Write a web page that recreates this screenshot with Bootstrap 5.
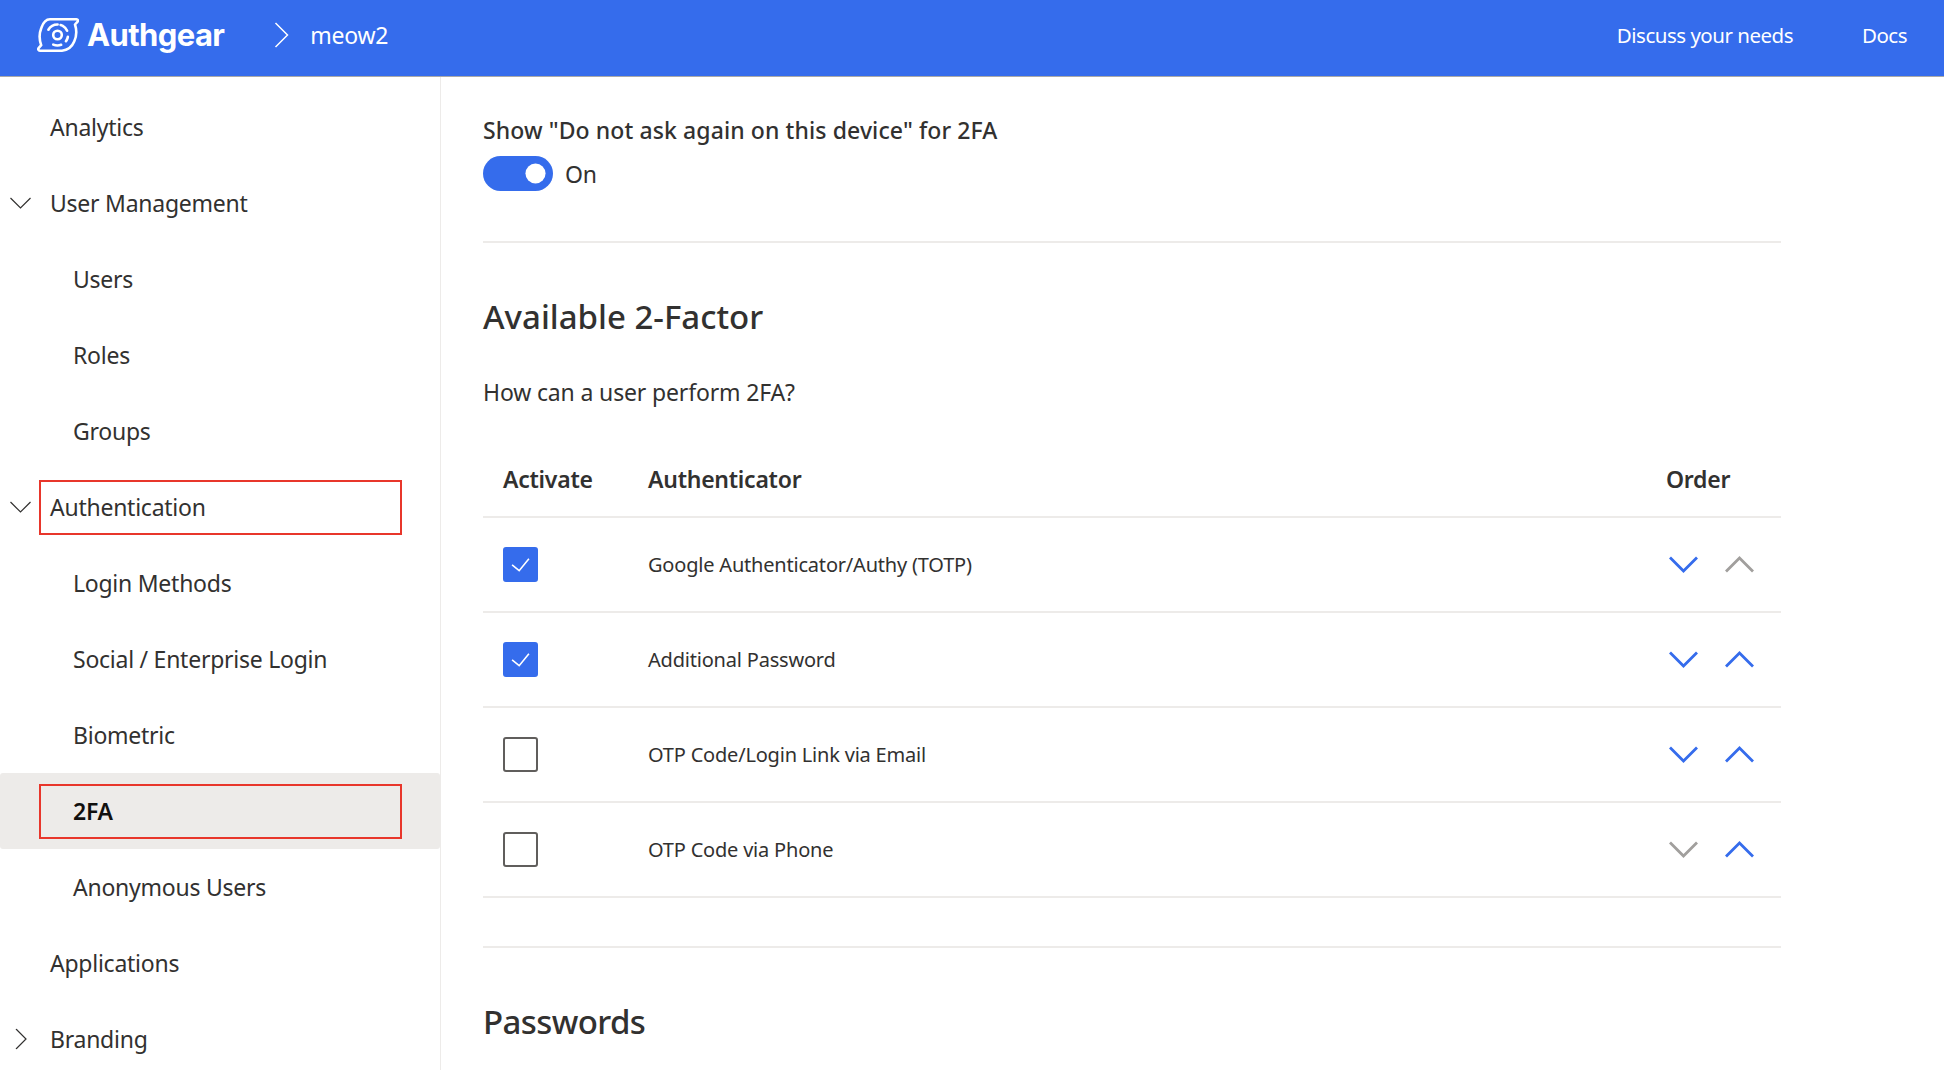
<!DOCTYPE html>
<html lang="en">
<head>
  <meta charset="UTF-8" />
  <meta name="viewport" content="width=device-width, initial-scale=1.0" />
  <title>Authgear - 2FA</title>
  <link rel="stylesheet" href="https://cdn.jsdelivr.net/npm/bootstrap@5.3.0/dist/css/bootstrap.min.css" />
  <style>
    body {
      font-family: "Noto Sans", "Open Sans", sans-serif;
      color: #323130;
      font-size: 23px;
      letter-spacing: -0.25px;
    }
    .ag-shell { height: 1070px; overflow: hidden; }
    .ag-top {
      height: 77px;
      background: #356cec;
      border-bottom: 1px solid #a9a9a9;
      color: #fff;
      padding: 0 37px 6px;
    }
    .ag-brand { font-family: "Inter", sans-serif; font-weight: 700; font-size: 31px; letter-spacing: -0.6px; margin-left: 8px; }
    .ag-crumb { margin: 0 21px 0 50px; }
    .ag-toplink { color: #fff; text-decoration: none; font-size: 20.5px; letter-spacing: -0.5px; }
    .ag-toplink + .ag-toplink { margin-left: 69px; }
    .ag-side {
      width: 441px;
      border-right: 1px solid #edebe9;
      padding-top: 12px;
    }
    .ag-item { height: 76px; position: relative; }
    .ag-item.ag-current { background: #edebe9; border-radius: 3px; font-weight: 600; color: #11100f; }
    .ag-arrow { position: absolute; left: 10px; top: 50%; transform: translateY(-50%); }
    .ag-arrow-right { left: 15px; }
    .ag-text { padding-left: 50px; }
    .ag-sub .ag-text { padding-left: 73px; }
    .ag-marked {
      outline: 2px solid #e8362b;
      outline-offset: -2px;
      position: absolute;
      left: 39px;
      width: 363px;
      top: 11px;
      height: 55px;
    }
    .ag-main { padding-left: 42px; width: 1340px; }
    .ag-label { font-weight: 500; margin-top: 35px; line-height: 36px; letter-spacing: 0.1px; }
    .ag-toggle-row { margin-top: 7px; }
    .ag-switch.form-check-input {
      width: 70px;
      height: 35px;
      margin: 0 12px 0 0;
      float: none;
      border: 0;
      background-color: #356cec;
      border-radius: 18px;
      background-image: url("data:image/svg+xml,%3csvg xmlns='http://www.w3.org/2000/svg' viewBox='-4 -4 8 8'%3e%3ccircle r='2.3' fill='%23fff'/%3e%3c/svg%3e");
      background-position: right center;
    }
    .ag-state { padding-top: 2px; }
    .ag-line { border: 0; border-top: 2px solid #edebe9; opacity: 1; margin: 0; }
    .ag-line-a { margin-top: 49px; }
    .ag-line-b { margin-top: 48px; }
    .ag-h2 { font-size: 33px; font-weight: 500; color: #323130; letter-spacing: 0; margin: 52px 0 0; line-height: 44px; }
    .ag-h2-tight { letter-spacing: -0.6px; }
    .ag-intro { margin: 36px 0 0; line-height: 34px; letter-spacing: -0.15px; }
    .ag-grid { --bs-table-border-color: #edebe9; --bs-table-color: #323130; margin: 34px 0 0; }
    .ag-grid th { font-weight: 600; height: 74px; padding: 0 0 0 20px; vertical-align: middle; border-bottom-width: 2px; }
    .ag-grid td { height: 95px; padding: 0 0 0 20px; vertical-align: middle; font-size: 20px; letter-spacing: -0.2px; border-bottom-width: 2px; }
    .ag-grid td.ag-name { padding-top: 2px; }
    .ag-col-activate { width: 145px; }
    .ag-col-order { width: 135px; }
    .ag-check.form-check-input {
      width: 35px;
      height: 35px;
      margin: 0;
      float: none;
      display: block;
      border: 2px solid #605e5c;
      border-radius: 3px;
    }
    .ag-check.form-check-input:checked {
      background-color: #356cec;
      border-color: #356cec;
      background-image: url("data:image/svg+xml,%3csvg xmlns='http://www.w3.org/2000/svg' viewBox='0 0 35 35'%3e%3cpath d='M8 18l8 6.500L27 11' fill='none' stroke='%23fff' stroke-width='1.800'/%3e%3c/svg%3e");
    }
    .ag-order { gap: 27px; padding-left: 3px; }
    .ag-on { color: #356cec; }
    .ag-off { color: #a19f9d; }
  </style>
</head>
<body>
  <svg class="d-none">
    <symbol id="ag-down" viewBox="0 0 29 17"><path d="M1 1.500l13.500 13.500 13.500-13.500" fill="none" stroke="currentColor" stroke-width="2.800"/></symbol>
    <symbol id="ag-up" viewBox="0 0 29 17"><path d="M1 15.500l13.500-13.500 13.500 13.500" fill="none" stroke="currentColor" stroke-width="2.800"/></symbol>
    <symbol id="ag-open" viewBox="0 0 21 12"><path d="M.5 1l10 10 10-10" fill="none" stroke="#323130" stroke-width="1.200"/></symbol>
  </svg>
  <div class="ag-shell d-flex flex-column">
    <header class="ag-top d-flex align-items-center flex-shrink-0">
      <svg width="42" height="36" viewBox="0 0 42 36" fill="none" stroke="#fff" stroke-width="2.600">
        <path d="M13 2.300h26.500c1.500 0 1.800 1.500.9 2.500l-2.400 2.700c1.800 5.500 1.500 12-.8 17-2.300 5.500-6.500 8.700-12.200 9.200H3c-1.700 0-2.200-1.700-1.200-2.800l2.400-2.700C2.300 23 2.300 16 4.300 11 6 6 9 2.300 13 2.300z" stroke-linejoin="round"/>
        <circle cx="20.500" cy="18" r="4.300"/>
        <circle cx="20.500" cy="18" r="10.500" stroke-dasharray="11 3 9 6 5 6 8 18" stroke-linecap="round" transform="rotate(-150 20.500 18)"/>
      </svg>
      <span class="ag-brand">Authgear</span>
      <svg class="ag-crumb" width="15" height="26" viewBox="0 0 15 26" fill="none" stroke="#fff" stroke-width="1.500"><path d="M1.500 1l12 12-12 12"/></svg>
      <span>meow2</span>
      <nav class="ms-auto d-flex">
        <a class="ag-toplink" href="#">Discuss your needs</a>
        <a class="ag-toplink" href="#">Docs</a>
      </nav>
    </header>
    <div class="d-flex flex-grow-1 overflow-hidden">
      <aside class="ag-side flex-shrink-0">
        <div class="ag-item d-flex align-items-center"><span class="ag-text">Analytics</span></div>
        <div class="ag-item d-flex align-items-center">
          <svg class="ag-arrow" width="21" height="12"><use href="#ag-open"/></svg>
          <span class="ag-text">User Management</span>
        </div>
        <div class="ag-item ag-sub d-flex align-items-center"><span class="ag-text">Users</span></div>
        <div class="ag-item ag-sub d-flex align-items-center"><span class="ag-text">Roles</span></div>
        <div class="ag-item ag-sub d-flex align-items-center"><span class="ag-text">Groups</span></div>
        <div class="ag-item d-flex align-items-center">
          <svg class="ag-arrow" width="21" height="12"><use href="#ag-open"/></svg>
          <span class="ag-text">Authentication</span>
          <div class="ag-marked"></div>
        </div>
        <div class="ag-item ag-sub d-flex align-items-center"><span class="ag-text">Login Methods</span></div>
        <div class="ag-item ag-sub d-flex align-items-center"><span class="ag-text">Social / Enterprise Login</span></div>
        <div class="ag-item ag-sub d-flex align-items-center"><span class="ag-text">Biometric</span></div>
        <div class="ag-item ag-sub ag-current d-flex align-items-center">
          <span class="ag-text">2FA</span>
          <div class="ag-marked"></div>
        </div>
        <div class="ag-item ag-sub d-flex align-items-center"><span class="ag-text">Anonymous Users</span></div>
        <div class="ag-item d-flex align-items-center"><span class="ag-text">Applications</span></div>
        <div class="ag-item d-flex align-items-center">
          <svg class="ag-arrow ag-arrow-right" width="12" height="21" viewBox="0 0 12 21" fill="none" stroke="#323130" stroke-width="1.200"><path d="M1 .5l10 10-10 10"/></svg>
          <span class="ag-text">Branding</span>
        </div>
      </aside>
      <main class="ag-main flex-shrink-0">
        <div class="ag-label">Show "Do not ask again on this device" for 2FA</div>
        <div class="d-flex align-items-center ag-toggle-row">
          <input class="form-check-input ag-switch" type="checkbox" role="switch" checked />
          <span class="ag-state">On</span>
        </div>
        <hr class="ag-line ag-line-a" />
        <h2 class="ag-h2">Available 2-Factor</h2>
        <p class="ag-intro">How can a user perform 2FA?</p>
        <table class="table ag-grid">
          <thead>
            <tr><th class="ag-col-activate">Activate</th><th>Authenticator</th><th class="ag-col-order">Order</th></tr>
          </thead>
          <tbody>
            <tr>
              <td><input class="form-check-input ag-check" type="checkbox" checked /></td>
              <td class="ag-name">Google Authenticator/Authy (TOTP)</td>
              <td>
                <div class="d-flex ag-order">
                  <svg class="ag-on" width="29" height="17"><use href="#ag-down"/></svg>
                  <svg class="ag-off" width="29" height="17"><use href="#ag-up"/></svg>
                </div>
              </td>
            </tr>
            <tr>
              <td><input class="form-check-input ag-check" type="checkbox" checked /></td>
              <td class="ag-name">Additional Password</td>
              <td>
                <div class="d-flex ag-order">
                  <svg class="ag-on" width="29" height="17"><use href="#ag-down"/></svg>
                  <svg class="ag-on" width="29" height="17"><use href="#ag-up"/></svg>
                </div>
              </td>
            </tr>
            <tr>
              <td><input class="form-check-input ag-check" type="checkbox" /></td>
              <td class="ag-name">OTP Code/Login Link via Email</td>
              <td>
                <div class="d-flex ag-order">
                  <svg class="ag-on" width="29" height="17"><use href="#ag-down"/></svg>
                  <svg class="ag-on" width="29" height="17"><use href="#ag-up"/></svg>
                </div>
              </td>
            </tr>
            <tr>
              <td><input class="form-check-input ag-check" type="checkbox" /></td>
              <td class="ag-name">OTP Code via Phone</td>
              <td>
                <div class="d-flex ag-order">
                  <svg class="ag-off" width="29" height="17"><use href="#ag-down"/></svg>
                  <svg class="ag-on" width="29" height="17"><use href="#ag-up"/></svg>
                </div>
              </td>
            </tr>
          </tbody>
        </table>
        <hr class="ag-line ag-line-b" />
        <h2 class="ag-h2 ag-h2-tight">Passwords</h2>
      </main>
    </div>
  </div>
  <script src="https://cdn.jsdelivr.net/npm/bootstrap@5.3.0/dist/js/bootstrap.bundle.min.js"></script>
</body>
</html>
